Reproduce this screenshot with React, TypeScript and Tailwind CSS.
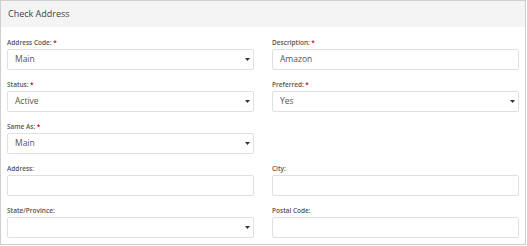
import React from 'react';

type Field = {
  label: string;
  required?: boolean;
  kind: 'select' | 'input';
  value?: string;
};

const rows: [Field | null, Field | null][] = [
  [
    { label: 'Address Code:', required: true, kind: 'select', value: 'Main' },
    { label: 'Description:', required: true, kind: 'input', value: 'Amazon' },
  ],
  [
    { label: 'Status:', required: true, kind: 'select', value: 'Active' },
    { label: 'Preferred:', required: true, kind: 'select', value: 'Yes' },
  ],
  [{ label: 'Same As:', required: true, kind: 'select', value: 'Main' }, null],
  [
    { label: 'Address:', kind: 'input' },
    { label: 'City:', kind: 'input' },
  ],
  [
    { label: 'State/Province:', kind: 'select' },
    { label: 'Postal Code:', kind: 'input' },
  ],
];

function Caret() {
  return (
    <svg width="5" height="3" viewBox="0 0 5 3" className="shrink-0">
      <path d="M0 0H5L2.5 3Z" fill="#333" />
    </svg>
  );
}

function FormField({ field }: { field: Field }) {
  return (
    <div className="flex flex-col">
      <div className="h-[12px] flex items-center text-[6.5px] font-semibold text-[#555] leading-none">
        {field.label}
        {field.required && <span className="text-[#d0021b] ml-[1.5px]">*</span>}
      </div>
      <div className="h-[21px] border border-[#e0e0e0] rounded-[2px] bg-white flex items-center justify-between pl-[7px] pr-[3px] text-[8.5px] text-[#555]">
        <span>{field.value ?? ''}</span>
        {field.kind === 'select' && <Caret />}
      </div>
    </div>
  );
}

export default function App() {
  return (
    <div className="w-[527px] h-[246px] bg-white font-['Open_Sans',sans-serif]">
      <div className="w-[526px] h-[245px] border border-[#cfcfcf] flex flex-col">
        <div className="h-[26px] bg-[#f4f4f4] flex items-center px-[7px] text-[9px] text-[#444]">
          Check Address
        </div>
        <div className="grid grid-cols-2 gap-x-[18px] gap-y-[9px] px-[6px] pt-[10px]">
          {rows.map((row, i) => (
            <React.Fragment key={i}>
              {row.map((f, j) => (f ? <FormField key={j} field={f} /> : <div key={j} />))}
            </React.Fragment>
          ))}
        </div>
      </div>
    </div>
  );
}
